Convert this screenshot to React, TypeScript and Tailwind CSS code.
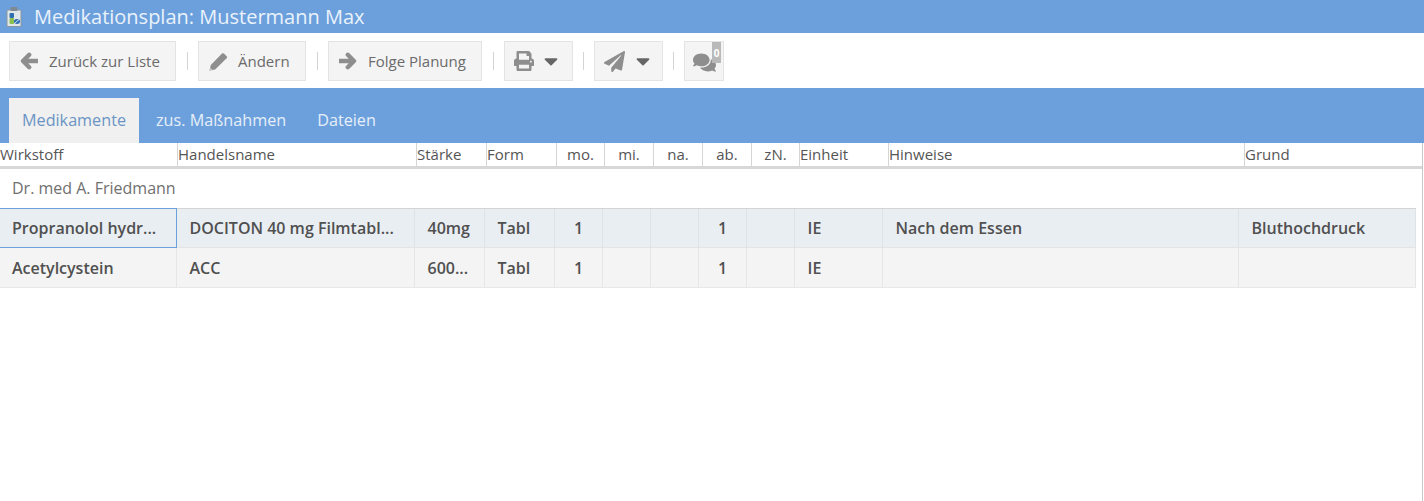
import React from "react";
import { FaPrint, FaCaretDown, FaPaperPlane, FaComments } from "react-icons/fa";

const headCols = [
  { w: "w-[177px]", t: "Wirkstoff" },
  { w: "w-[239px]", t: "Handelsname" },
  { w: "w-[70px]", t: "Stärke" },
  { w: "w-[70px]", t: "Form" },
  { w: "w-[48px]", t: "mo.", c: true },
  { w: "w-[49px]", t: "mi.", c: true },
  { w: "w-[49px]", t: "na.", c: true },
  { w: "w-[49px]", t: "ab.", c: true },
  { w: "w-[48px]", t: "zN.", c: true },
  { w: "w-[89px]", t: "Einheit" },
  { w: "w-[356px]", t: "Hinweise" },
  { w: "w-[178px]", t: "Grund" },
];

const rowGrid = "grid grid-cols-[177px_238px_70px_70px_48px_48px_48px_48px_48px_88px_356px_177px] w-[1416px]";

const rows = [
  ["Propranolol hydr...", "DOCITON 40 mg Filmtabl...", "40mg", "Tabl", "1", "", "", "1", "", "IE", "Nach dem Essen", "Bluthochdruck"],
  ["Acetylcystein", "ACC", "600...", "Tabl", "1", "", "", "1", "", "IE", "", ""],
];

function Sep({ className = "mr-[10px] ml-[11px]" }: { className?: string }) {
  return <div className={`h-[18px] w-px bg-[#d4d4d4] ${className}`} />;
}

function Btn({ children, className = "" }: { children: React.ReactNode; className?: string }) {
  return (
    <div className={`flex h-[40px] items-center border border-[#e4e4e4] bg-[#f4f4f4] text-[15px] text-[#6b6b6b] ${className}`}>
      {children}
    </div>
  );
}

function Arrow({ flip = false }: { flip?: boolean }) {
  return (
    <svg width="18" height="18" viewBox="0 0 18 18" className={`mr-[11px] ${flip ? "-scale-x-100" : ""}`}>
      <path d="M9.2 2.8 L3 9 L9.2 15.2 M4 9 H17.5" fill="none" stroke="#8e8e8e" strokeWidth="4.4" strokeLinejoin="round" strokeLinecap="round" />
    </svg>
  );
}

function Pencil() {
  return (
    <svg width="19" height="19" viewBox="0 0 19 19" className="mr-[10px]">
      <path d="M0.5 18.5 L1.8 13 L13 1.6 Q14 0.7 15 1.6 L17.6 4.2 Q18.5 5.2 17.6 6.2 L6.2 17.4 Z" fill="#8e8e8e" />
      <path d="M0.5 18.5 L1.2 15.6 L3.6 18 Z" fill="#c4c4c4" />
    </svg>
  );
}

function Logo() {
  return (
    <svg width="16" height="20" viewBox="0 0 16 20">
      <rect x="0.5" y="2.5" width="15" height="17.5" rx="1.5" fill="#8a959e" />
      <rect x="1.5" y="3.5" width="13" height="15.5" fill="#dfe7ea" />
      <rect x="4.5" y="0" width="7" height="4" rx="1" fill="#7d8a94" />
      <rect x="3.5" y="6" width="4.5" height="5" rx="1" fill="#2f6fb0" />
      <rect x="3.5" y="11" width="4.5" height="6" rx="1" fill="#8cc152" />
      <ellipse cx="11" cy="14.5" rx="3" ry="2.4" fill="#2f6fb0" />
      <path d="M9 16l4-3.5" stroke="#fff" strokeWidth="0.8" />
    </svg>
  );
}

export default function App() {
  return (
    <div className="relative h-[501px] w-[1424px] overflow-hidden bg-white font-['Open_Sans',sans-serif]">
      <div className="flex h-[33px] items-center bg-[#6ca0dc] pl-[6px]">
        <Logo />
        <span className="ml-[12px] text-[20px] leading-none text-[#eaf2fb]">Medikationsplan: Mustermann Max</span>
      </div>

      <div className="flex h-[55px] items-center pl-[9px] pt-[1px]">
        <Btn className="w-[167px] pl-[10px]">
          <Arrow />
          Zurück zur Liste
        </Btn>
        <Sep />
        <Btn className="w-[108px] pl-[10px]">
          <Pencil />
          Ändern
        </Btn>
        <Sep />
        <Btn className="w-[154px] pl-[10px]">
          <Arrow flip />
          Folge Planung
        </Btn>
        <Sep />
        <Btn className="w-[69px] pl-[9px]">
          <FaPrint className="text-[20px] text-[#8e8e8e]" />
          <FaCaretDown className="ml-[6px] text-[22px] text-[#666666]" />
        </Btn>
        <Sep className="ml-[10px] mr-[10px]" />
        <Btn className="w-[69px] pl-[9px]">
          <FaPaperPlane className="text-[21px] text-[#8e8e8e]" />
          <FaCaretDown className="ml-[7px] text-[22px] text-[#666666]" />
        </Btn>
        <Sep className="ml-[10px] mr-[10px]" />
        <Btn className="relative w-[40px] pl-[8px]">
          <FaComments className="mt-[3px] text-[23px] text-[#8e8e8e]" />
          <span className="absolute right-[2px] top-0 flex h-[21px] w-[9px] items-center justify-center bg-[#b9b9b9] text-[10px] font-bold leading-none text-white">
            0
          </span>
        </Btn>
      </div>

      <div className="flex h-[55px] items-end bg-[#6ca0dc] pl-[9px]">
        <div className="flex h-[45px] w-[130px] items-center justify-center bg-[#f0f0f0] pb-[1px] text-[16.2px] text-[#6b94c4]">Medikamente</div>
        <div className="ml-[17px] flex h-[45px] items-center pb-[1px] text-[16.2px] text-[#e6eff9]">zus. Maßnahmen</div>
        <div className="ml-[31px] flex h-[45px] items-center pb-[1px] text-[16.2px] text-[#e6eff9]">Dateien</div>
      </div>

      <div className="flex h-[23px] w-[1422px]">
        {headCols.map((c, i) => (
          <div
            key={c.t}
            className={`${c.w} ${c.c ? "text-center" : ""} ${i > 0 ? "border-l border-[#d5d5d5]" : ""} text-[15px] leading-[23px] text-[#555555]`}
          >
            {c.t}
          </div>
        ))}
      </div>
      <div className="h-[3px] w-[1422px] bg-[#d8d8d8]" />

      <div className="flex h-[39px] items-center pb-[2px] pl-[12px] text-[16px] text-[#707070]">Dr. med A. Friedmann</div>

      {rows.map((r, ri) => (
        <div
          key={ri}
          className={`${rowGrid} h-[40px] border-b ${ri === 0 ? "border-t border-t-[#d4d4d4] border-b-[#e4e4e4] bg-[#e9eef3]" : "border-b-[#e8e8e8] bg-[#f4f4f4]"}`}
        >
          {r.map((cell, ci) => (
            <div
              key={ci}
              className={`flex items-center truncate text-[16px] font-semibold text-[#505050] ${
                ri === 0 && ci === 0
                  ? "-mb-px -mt-px border-y border-r border-y-[#6ca0dc] border-r-[#6ca0dc]"
                  : ri === 0
                    ? "border-r border-r-[#dfe3e7]"
                    : "border-r border-r-[#e6e6e6]"
              } ${ci > 3 && ci < 9 ? "justify-center" : ci === 0 ? "pl-[12px]" : "pl-[12.5px]"}`}
            >
              {cell}
            </div>
          ))}
        </div>
      ))}

      <div className="absolute bottom-0 right-[1px] top-[143px] w-px bg-[#c8c8c8]" />
    </div>
  );
}
